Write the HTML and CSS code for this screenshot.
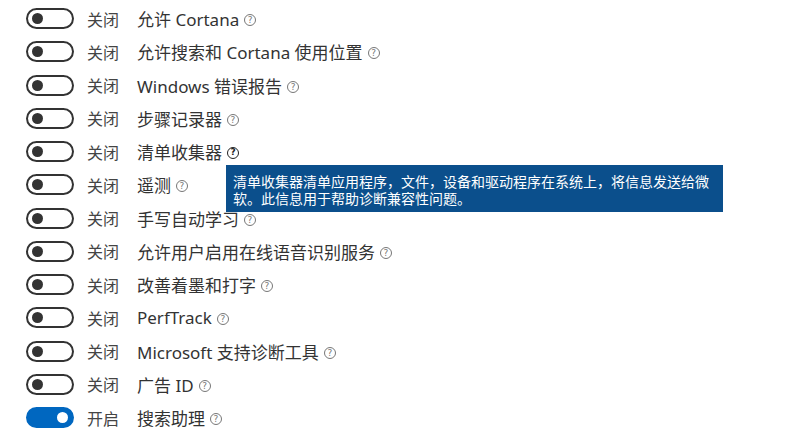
FILE: index.html
```html
<!DOCTYPE html>
<html lang="zh-CN">
<head>
  <meta charset="UTF-8" />
  <title>隐私设置</title>
  <link rel="stylesheet" href="styles.css">
</head>
<body>
  <ul class="settings">
    <li class="row"><span class="toggle"></span><span class="state">关闭</span><span class="label">允许 Cortana</span><span class="help">?</span></li>
    <li class="row"><span class="toggle"></span><span class="state">关闭</span><span class="label">允许搜索和 Cortana 使用位置</span><span class="help">?</span></li>
    <li class="row"><span class="toggle"></span><span class="state">关闭</span><span class="label">Windows 错误报告</span><span class="help">?</span></li>
    <li class="row"><span class="toggle"></span><span class="state">关闭</span><span class="label">步骤记录器</span><span class="help">?</span></li>
    <li class="row"><span class="toggle"></span><span class="state">关闭</span><span class="label">清单收集器</span><span class="help active">?
      <span class="tooltip">清单收集器清单应用程序，文件，设备和驱动程序在系统上，将信息发送给微软。此信息用于帮助诊断兼容性问题。</span></span></li>
    <li class="row"><span class="toggle"></span><span class="state">关闭</span><span class="label">遥测</span><span class="help">?</span></li>
    <li class="row"><span class="toggle"></span><span class="state">关闭</span><span class="label">手写自动学习</span><span class="help">?</span></li>
    <li class="row"><span class="toggle"></span><span class="state">关闭</span><span class="label">允许用户启用在线语音识别服务</span><span class="help">?</span></li>
    <li class="row"><span class="toggle"></span><span class="state">关闭</span><span class="label">改善着墨和打字</span><span class="help">?</span></li>
    <li class="row"><span class="toggle"></span><span class="state">关闭</span><span class="label">PerfTrack</span><span class="help">?</span></li>
    <li class="row"><span class="toggle"></span><span class="state">关闭</span><span class="label">Microsoft 支持诊断工具</span><span class="help">?</span></li>
    <li class="row"><span class="toggle"></span><span class="state">关闭</span><span class="label">广告 ID</span><span class="help">?</span></li>
    <li class="row"><span class="toggle on"></span><span class="state">开启</span><span class="label">搜索助理</span><span class="help">?</span></li>
  </ul>
</body>
</html>
```

FILE: styles.css
```css
body, ul, li {
  margin: 0;
  padding: 0;
  box-sizing: border-box;
}

body {
  font-family: 'Noto Sans', 'Noto Sans CJK SC', sans-serif;
  background-color: #ffffff;
  color: #333333;
  min-height: 100vh;
  overflow: hidden;
}

.settings {
  list-style: none;
  padding: 2px 0 0 26px;
}

.row {
  display: flex;
  align-items: center;
  height: 33.25px;
  font-size: 17px;
}

.toggle {
  width: 48px;
  height: 21px;
  border: 2px solid #333333;
  border-radius: 11px;
  box-sizing: border-box;
  display: flex;
  align-items: center;
  padding-left: 4px;
  flex-shrink: 0;
}

.toggle::before {
  content: "";
  width: 11px;
  height: 11px;
  border-radius: 50%;
  background-color: #333333;
}

.toggle.on {
  background-color: #0067c0;
  border-color: #0067c0;
  justify-content: flex-end;
  padding-left: 0;
  padding-right: 4px;
}

.toggle.on::before {
  background-color: #ffffff;
}

.state {
  width: 50px;
  margin-left: 13px;
  font-size: 16px;
  color: #444444;
}

.label {
  color: #333333;
}

.help {
  position: relative;
  width: 12px;
  height: 12px;
  margin-left: 5px;
  margin-top: 3px;
  border: 1px solid #777777;
  border-radius: 50%;
  box-sizing: border-box;
  font-size: 9px;
  line-height: 10px;
  text-align: center;
  color: #777777;
  font-family: 'DejaVu Sans', sans-serif;
}

.help.active {
  border-color: #222222;
  color: #222222;
  border-width: 1.5px;
  line-height: 9px;
  font-weight: bold;
}

.tooltip {
  position: absolute;
  left: -2px;
  top: 17px;
  width: 497px;
  padding: 8px 7px 5px 7px;
  box-sizing: border-box;
  background-color: #0b4f8c;
  color: #ffffff;
  font-family: 'Noto Sans CJK SC', sans-serif;
  font-weight: normal;
  font-size: 14px;
  line-height: 17px;
  text-align: left;
  z-index: 2;
}
```
